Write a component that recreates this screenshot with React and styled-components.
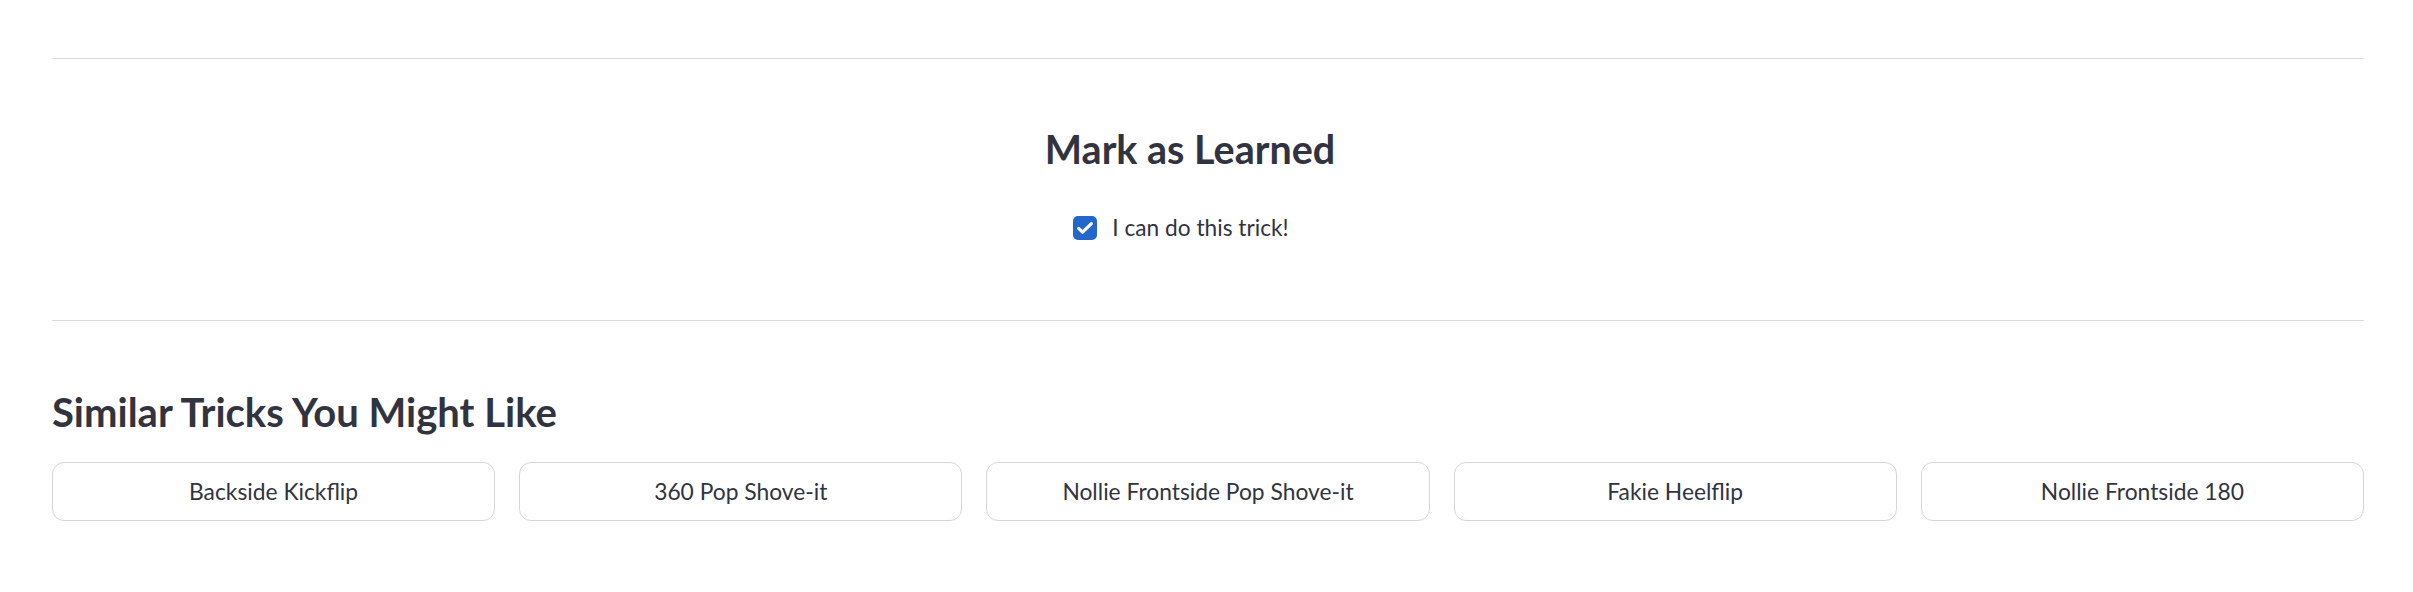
import React, { useState } from 'react';
import styled, { createGlobalStyle } from 'styled-components';

const GlobalStyle = createGlobalStyle`
  html, body {
    margin: 0;
    padding: 0;
    background: #ffffff;
  }
  body {
    font-family: Lato, "Liberation Sans", sans-serif;
    color: #31333f;
  }
`;

const tricks = [
  'Backside Kickflip',
  '360 Pop Shove-it',
  'Nollie Frontside Pop Shove-it',
  'Fakie Heelflip',
  'Nollie Frontside 180',
];

const App = () => {
  const [learned, setLearned] = useState(true);

  return (
    <Page>
      <GlobalStyle />
      <Divider />
      <LearnedSection>
        <SectionTitle size={39.5}>Mark as Learned</SectionTitle>
        <CheckLabel>
          <HiddenInput
            type="checkbox"
            checked={learned}
            onChange={() => setLearned(!learned)}
          />
          <CheckBox checked={learned}>
            {learned && (
              <svg width="20" height="20" viewBox="0 0 20 20" fill="none">
                <path d="M3.6 10.4l4 3.8L16.4 5.6" stroke="#fff" strokeWidth="3.2" strokeLinecap="round" strokeLinejoin="round" />
              </svg>
            )}
          </CheckBox>
          I can do this trick!
        </CheckLabel>
      </LearnedSection>
      <Divider />
      <SimilarSection>
        <SectionTitle size={40}>Similar Tricks You Might Like</SectionTitle>
        <TrickGrid>
          {tricks.map((name) => (
            <TrickButton key={name}>{name}</TrickButton>
          ))}
        </TrickGrid>
      </SimilarSection>
    </Page>
  );
};

const Page = styled.div`
  padding: 58px 49px 60px 52px;
`;

const Divider = styled.hr`
  margin: 0;
  border: none;
  height: 1px;
  background: #dcdcde;
`;

const LearnedSection = styled.section`
  display: flex;
  flex-direction: column;
  align-items: center;
  padding: 66px 36px 77px 0;
  gap: 41px;
`;

const SectionTitle = styled.h3`
  margin: 0;
  font-size: ${(p) => p.size}px;
  line-height: 1.2;
  font-weight: 700;
  color: #31333f;
`;

const CheckLabel = styled.label`
  display: flex;
  align-items: center;
  gap: 15px;
  margin-right: 18px;
  font-size: 22.7px;
  line-height: 30px;
  cursor: pointer;
`;

const HiddenInput = styled.input`
  position: absolute;
  opacity: 0;
  width: 0;
  height: 0;
`;

const CheckBox = styled.span`
  width: 24px;
  height: 24px;
  border-radius: 5px;
  display: flex;
  align-items: center;
  justify-content: center;
  background: ${(p) => (p.checked ? '#2366cc' : '#fff')};
  border: ${(p) => (p.checked ? 'none' : '1px solid #b0b2b8')};
  box-sizing: border-box;
`;

const SimilarSection = styled.section`
  padding-top: 67px;
  display: flex;
  flex-direction: column;
  gap: 25.5px;
`;

const TrickGrid = styled.div`
  display: grid;
  grid-template-columns: repeat(5, 1fr);
  gap: 24px;
`;

const TrickButton = styled.button`
  height: 59px;
  border: 1px solid #d6d6d9;
  border-radius: 12px;
  background: #fff;
  font-family: inherit;
  font-size: 22.8px;
  color: #31333f;
  cursor: pointer;
`;

export default App;
